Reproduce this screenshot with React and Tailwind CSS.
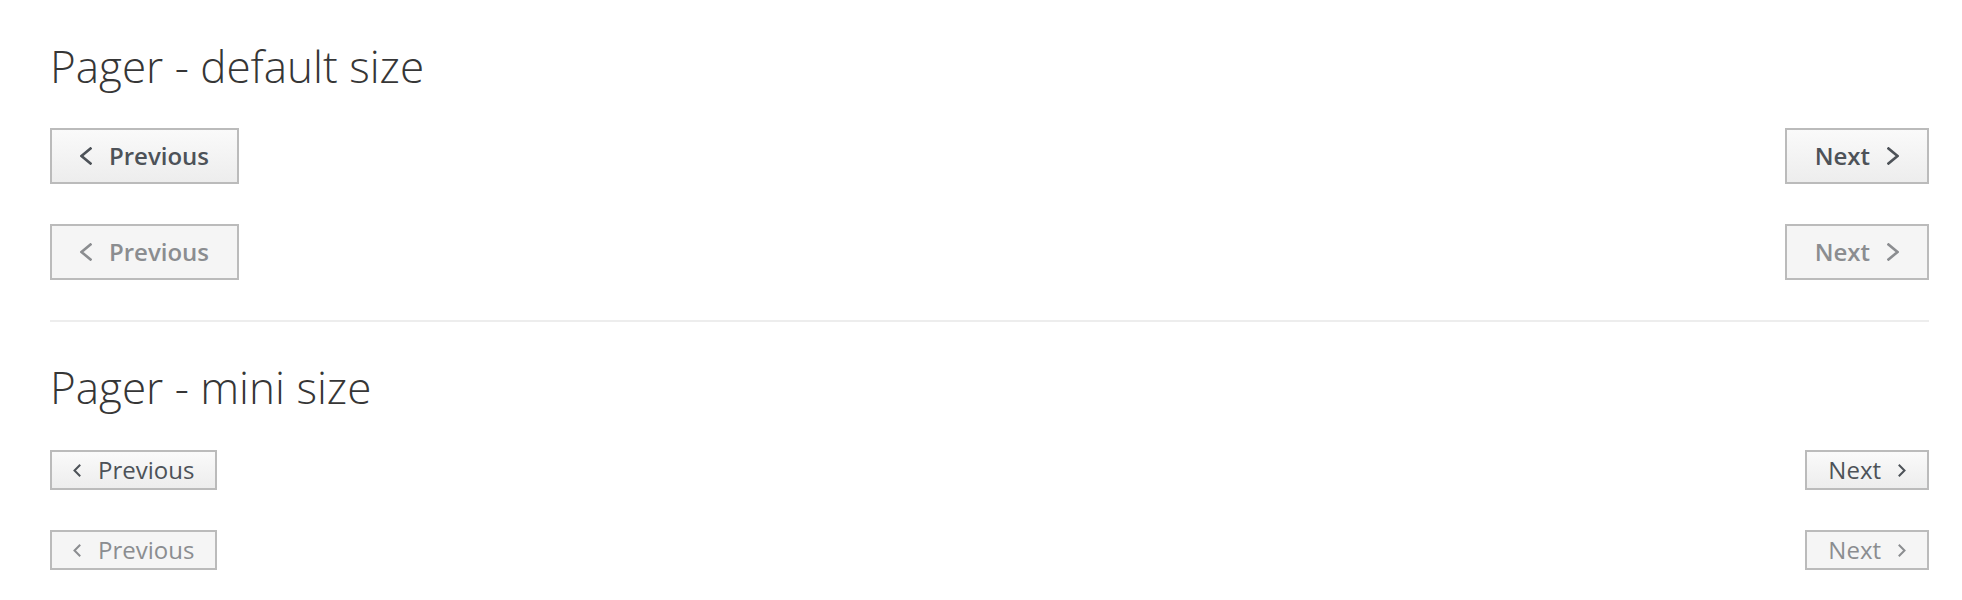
import React from "react";

const font = { fontFamily: "'Open Sans', 'Liberation Sans', sans-serif" };

// thin angle glyph used beside the pager labels
const Angle = ({ dir = "left", mini = false }) => {
  const w = mini ? 8 : 12;
  const h = mini ? 13 : 18;
  const pts =
    dir === "left"
      ? `${w - 1.5},1.5 1.5,${h / 2} ${w - 1.5},${h - 1.5}`
      : `1.5,1.5 ${w - 1.5},${h / 2} 1.5,${h - 1.5}`;
  return (
    <svg width={w} height={h} viewBox={`0 0 ${w} ${h}`} className="shrink-0">
      <polyline
        points={pts}
        fill="none"
        stroke="currentColor"
        strokeWidth={mini ? 2 : 2.6}
        strokeLinecap="square"
      />
    </svg>
  );
};

const PagerButton = ({ dir, label, mini, disabled }) => {
  const base =
    "flex items-center border-2 border-[#bbb] cursor-default select-none";
  const size = mini
    ? "h-[40px] px-[21px] gap-[17px] text-[24px] font-normal"
    : "h-[56px] px-[28px] gap-[17px] text-[24px] font-semibold";
  const tone = disabled
    ? "bg-[#f5f5f5] text-[#8b8d90]"
    : "bg-gradient-to-b from-[#fafafa] to-[#ededed] text-[#4d5258]";
  return (
    <button className={`${base} ${size} ${tone}`} style={font} disabled={disabled}>
      {dir === "left" && <Angle dir="left" mini={mini} />}
      <span className="leading-none">{label}</span>
      {dir === "right" && <Angle dir="right" mini={mini} />}
    </button>
  );
};

const PagerRow = ({ mini, disabled, className = "" }) => (
  <div className={`flex justify-between ${className}`}>
    <PagerButton dir="left" label="Previous" mini={mini} disabled={disabled} />
    <PagerButton dir="right" label="Next" mini={mini} disabled={disabled} />
  </div>
);

export default function App() {
  return (
    <div className="bg-white min-h-[600px] pl-[50px] pr-[33px] pt-[38px]" style={font}>
      <h2 className="text-[44px] leading-[56px] font-light text-[#363636]">
        Pager - default size
      </h2>
      <PagerRow className="mt-[34px]" />
      <PagerRow className="mt-[40px]" disabled />

      <hr className="mt-[40px] border-0 h-[2px] bg-[#ededed]" />

      <h2 className="mt-[37px] text-[44px] leading-[56px] font-light text-[#363636]">
        Pager - mini size
      </h2>
      <PagerRow className="mt-[35px]" mini />
      <PagerRow className="mt-[40px]" mini disabled />
    </div>
  );
}
